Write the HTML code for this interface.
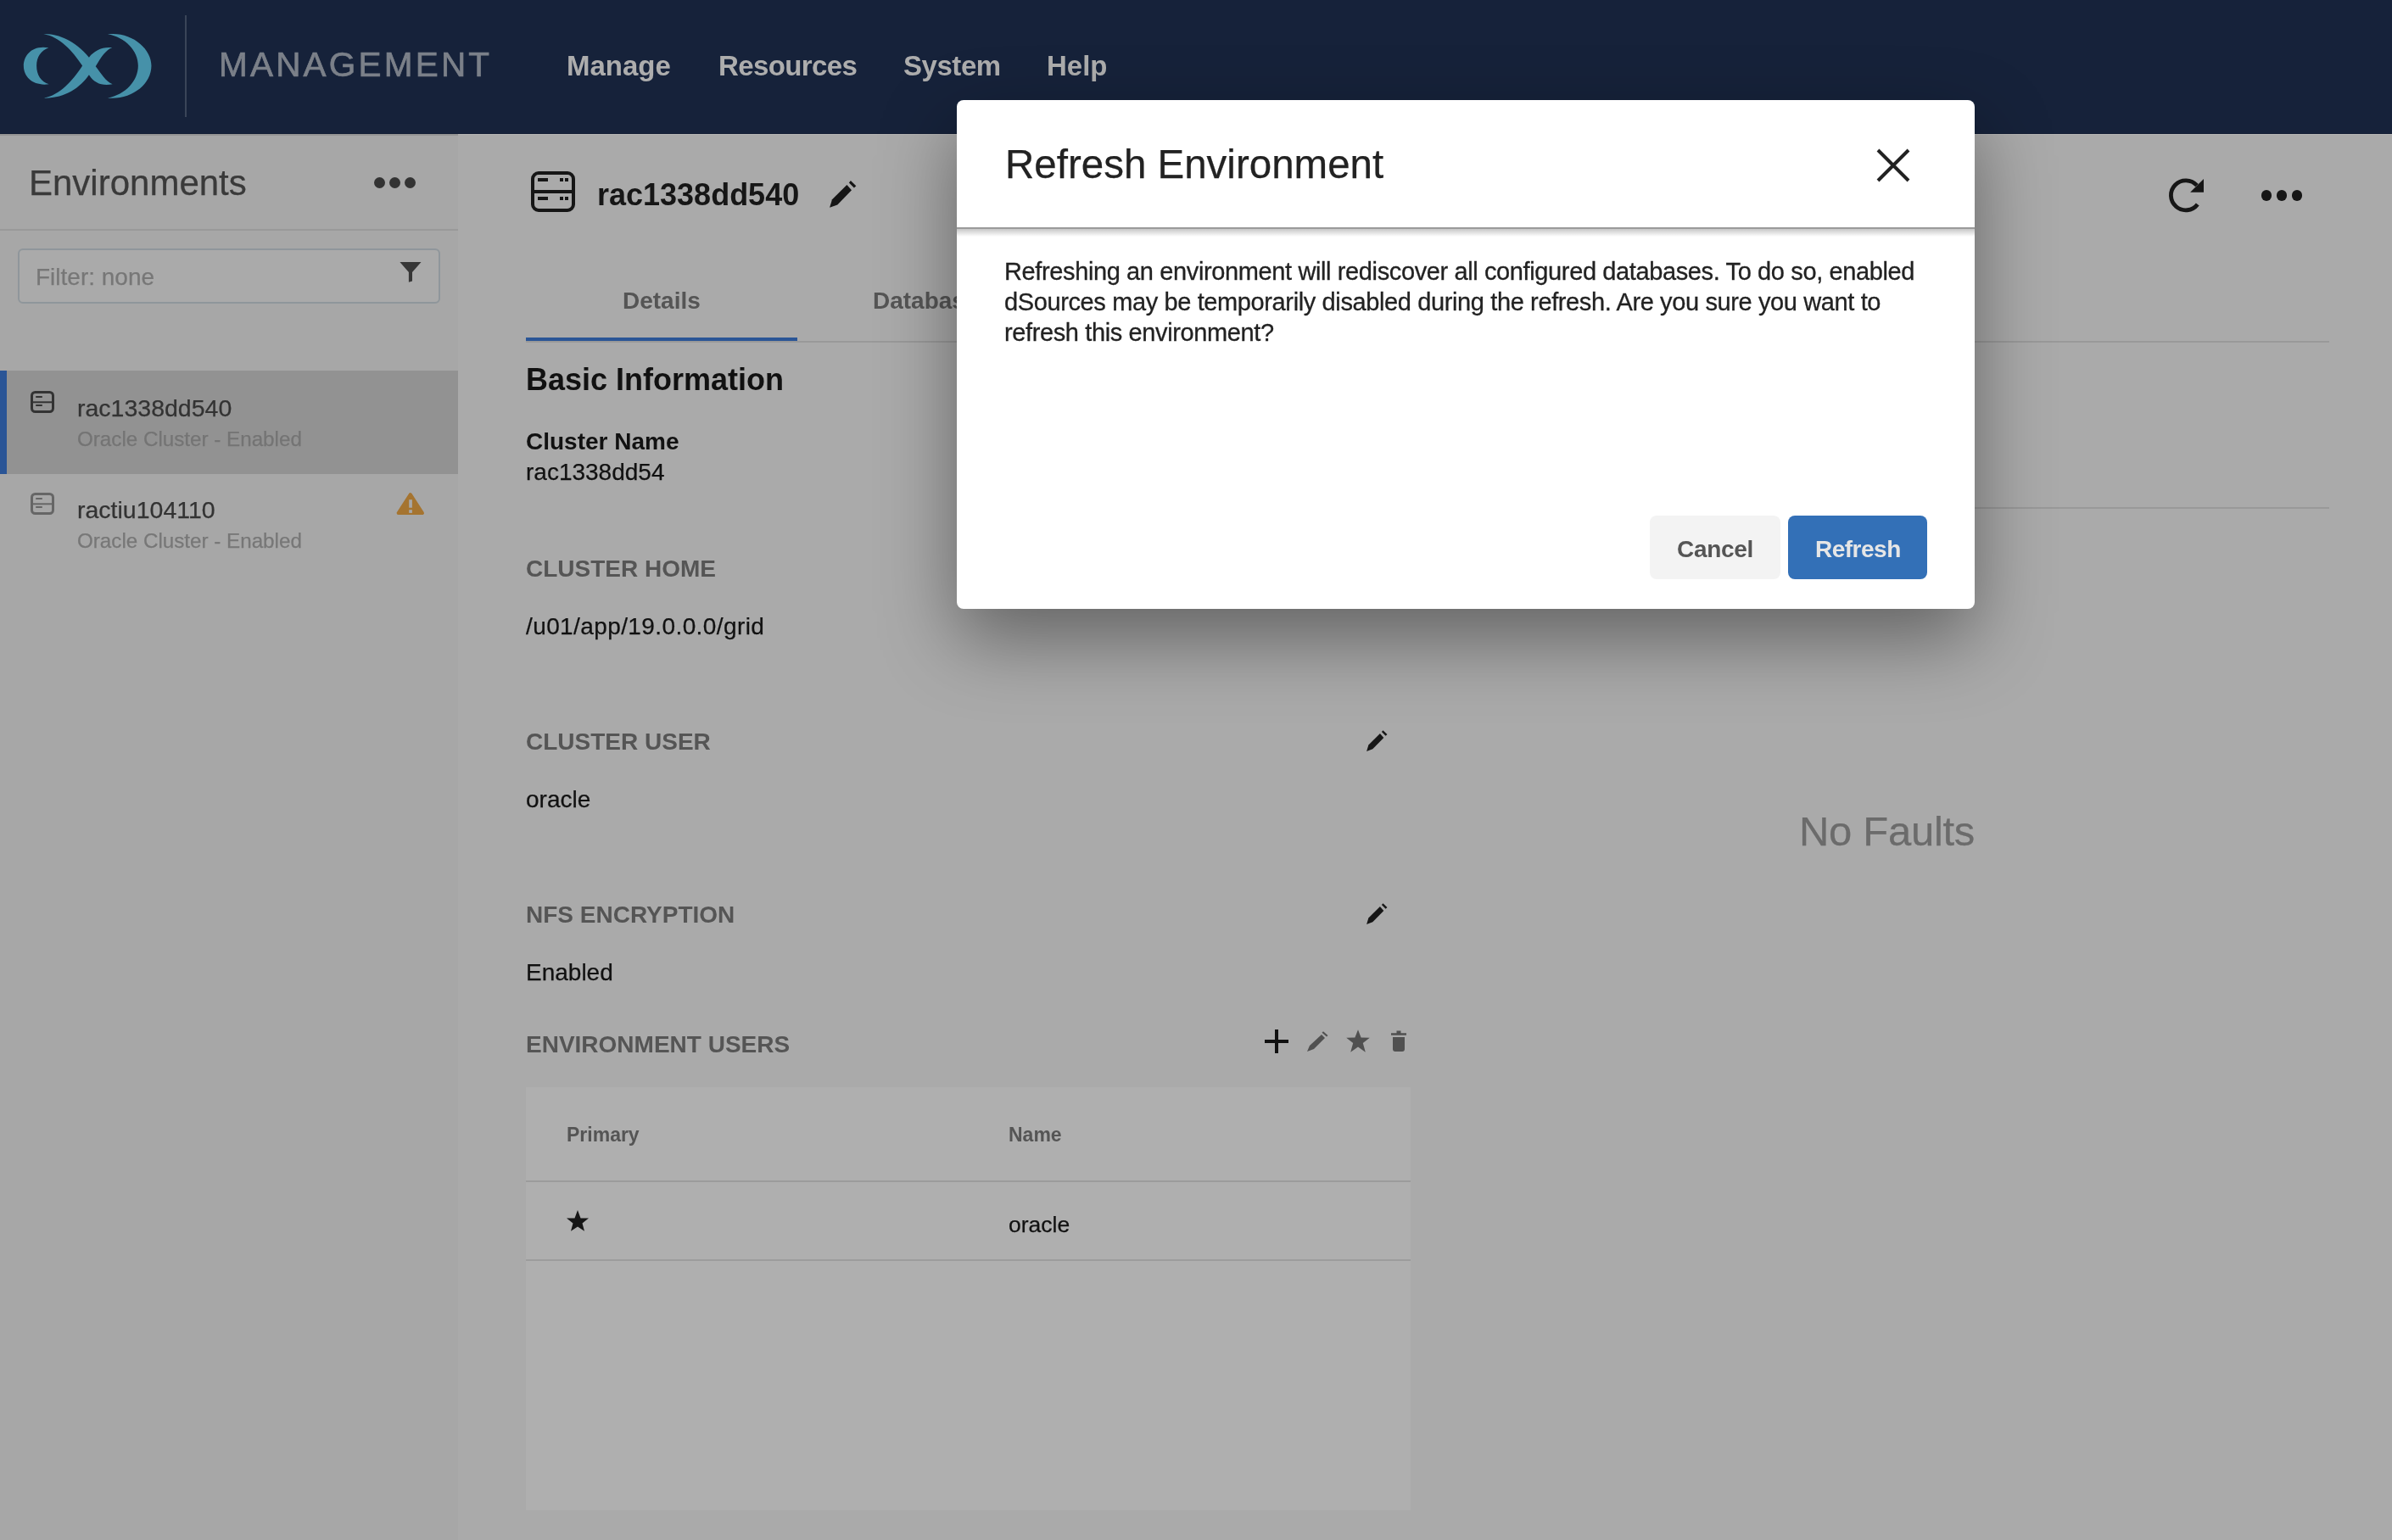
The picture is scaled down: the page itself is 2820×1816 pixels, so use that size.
<!DOCTYPE html>
<html><head><meta charset="utf-8">
<style>
*{margin:0;padding:0;box-sizing:border-box}
html,body{width:2820px;height:1816px;overflow:hidden}
body{position:relative;background:#aaaaaa;font-family:"Liberation Sans",sans-serif;color:#111}
.a{position:absolute;white-space:nowrap}
.t{position:absolute;white-space:nowrap;line-height:1;will-change:transform}
.b{font-weight:bold}
.s{-webkit-text-stroke:0.25px currentColor}
</style></head><body>
<div class="a" style="left:0;top:0;width:2820px;height:158px;background:#16223a"></div>
<svg class="a" style="left:20px;top:30px" width="170" height="95" viewBox="0 0 2392 1337">
<g fill="#4691a9">
<path d="M525,370 C250,320 110,500 110,670 C110,870 280,1010 530,975 C400,940 325,820 325,670 C325,520 400,420 525,370 Z"/>
<path d="M1505,145 C1900,100 2230,380 2230,670 C2230,980 1900,1240 1505,1205 C1800,1150 2010,920 2010,670 C2010,420 1800,200 1505,145 Z"/>
<path d="M440,145 C650,130 950,230 1195,530 C1280,420 1420,350 1580,370 C1480,400 1400,520 1305,680 C1400,800 1470,930 1585,975 C1420,1010 1280,960 1195,820 C1050,1030 800,1210 450,1205 C700,1160 920,930 1085,670 C920,420 700,180 440,145 Z"/>
</g></svg>
<div class="a" style="left:218px;top:18px;width:2px;height:120px;background:#3a4558"></div>
<div class="t" style="left:258px;top:56px;font-size:40.5px;color:#7b8089;letter-spacing:3.2px;-webkit-text-stroke:0.7px #7b8089">MANAGEMENT</div>
<div class="t b" style="left:668px;top:61px;font-size:33px;color:#adadad;">Manage</div>
<div class="t b" style="left:847px;top:61px;font-size:33px;color:#adadad;letter-spacing:-0.6px">Resources</div>
<div class="t b" style="left:1065px;top:61px;font-size:33px;color:#adadad;letter-spacing:-0.45px">System</div>
<div class="t b" style="left:1234px;top:61px;font-size:33px;color:#adadad;">Help</div>
<div class="a" style="left:0;top:158px;width:540px;height:1658px;background:#a7a7a7"></div>
<div class="a" style="left:0;top:158px;width:540px;height:2px;background:#949494"></div>
<div class="a" style="left:540px;top:158px;width:2280px;height:1px;background:#b4b4b4"></div>
<div class="a" style="left:0;top:157px;width:2820px;height:1px;background:#131e34"></div>
<div class="t s" style="left:33.5px;top:194.5px;font-size:42px;color:#3a3a3a;">Environments</div>
<div class="a" style="left:440.5px;top:208.5px;width:13px;height:13px;border-radius:50%;background:#333"></div>
<div class="a" style="left:458.5px;top:208.5px;width:13px;height:13px;border-radius:50%;background:#333"></div>
<div class="a" style="left:476.5px;top:208.5px;width:13px;height:13px;border-radius:50%;background:#333"></div>
<div class="a" style="left:0;top:270px;width:540px;height:2px;background:#999"></div>
<div class="a" style="left:21px;top:293px;width:498px;height:65px;border:2px solid #8f969b;border-radius:6px;background:#aaaaaa"></div>
<div class="t s" style="left:42px;top:312.7px;font-size:28px;color:#777;">Filter: none</div>
<svg class="a" style="left:470px;top:308px" width="28" height="26" viewBox="0 0 28 26">
<path d="M1.4,1 L26.5,1 L16,13.1 L16,23.4 L11.9,24.8 L11.9,13.1 Z" fill="#363636"/></svg>
<div class="a" style="left:0;top:437px;width:540px;height:122px;background:#929292"></div>
<div class="a" style="left:0;top:437px;width:8px;height:122px;background:#2a5596"></div>
<svg class="a" style="left:36px;top:461px" width="28" height="26" viewBox="0 0 28 26">
<rect x="1.5" y="1.5" width="25" height="23" rx="4" fill="none" stroke="#333" stroke-width="3"/>
<rect x="2" y="12.3" width="24" height="2" fill="#333"/>
<rect x="6.2" y="6" width="7.6" height="2" fill="#333"/>
<rect x="6.2" y="16" width="7.6" height="2" fill="#333"/>
</svg>
<div class="t s" style="left:91px;top:467.3px;font-size:28.5px;color:#333;">rac1338dd540</div>
<div class="t s" style="left:91px;top:505.8px;font-size:24.2px;color:#747474;">Oracle Cluster - Enabled</div>
<svg class="a" style="left:36px;top:581px" width="28" height="26" viewBox="0 0 28 26">
<rect x="1.5" y="1.5" width="25" height="23" rx="4" fill="none" stroke="#666" stroke-width="3"/>
<rect x="2" y="12.3" width="24" height="2" fill="#666"/>
<rect x="6.2" y="6" width="7.6" height="2" fill="#666"/>
<rect x="6.2" y="16" width="7.6" height="2" fill="#666"/>
</svg>
<div class="t s" style="left:91px;top:587.3px;font-size:28.5px;color:#333;">ractiu104110</div>
<div class="t s" style="left:91px;top:625.8px;font-size:24.2px;color:#777;">Oracle Cluster - Enabled</div>
<svg class="a" style="left:467px;top:580px" width="34" height="28" viewBox="0 0 34 28">
<path d="M16.8,3.2 L31,25 L2.6,25 Z" fill="#a57430" stroke="#a57430" stroke-width="4" stroke-linejoin="round"/>
<rect x="15.2" y="9.2" width="3.7" height="9.5" fill="#a7a7a7"/>
<rect x="15.2" y="21.2" width="3.7" height="3.7" fill="#a7a7a7"/>
</svg>
<svg class="a" style="left:626px;top:202px" width="52" height="48" viewBox="0 0 52 48">
<rect x="2" y="2" width="48" height="44" rx="7" fill="none" stroke="#161616" stroke-width="4"/>
<rect x="2" y="22" width="48" height="4" fill="#161616"/>
<rect x="8" y="8" width="12" height="4" fill="#161616"/>
<rect x="34" y="8" width="4" height="4" fill="#161616"/>
<rect x="40" y="8" width="4" height="4" fill="#161616"/>
<rect x="8" y="30" width="12" height="4" fill="#161616"/>
<rect x="34" y="30" width="4" height="4" fill="#161616"/>
<rect x="40" y="30" width="4" height="4" fill="#161616"/>
</svg>
<div class="t b" style="left:704px;top:212.0px;font-size:36px;color:#161616;">rac1338dd540</div>
<svg class="a" style="left:960px;top:200px" width="70" height="60" viewBox="0 0 70 60">
<path d="M38.4,18.1 L44,24.3 L27.3,41.5 L18.1,44.8 L21,35.3 Z" fill="#161616"/>
<path d="M42.9,13 L49.3,19.3 L46.9,21.6 L40.9,15.4 Z" fill="#161616"/>
</svg>
<div class="t b" style="left:734px;top:340.7px;font-size:28px;color:#555;">Details</div>
<div class="t b" style="left:1029px;top:340.7px;font-size:28px;color:#555;">Databases</div>
<div class="a" style="left:620px;top:402px;width:2126px;height:2px;background:#999"></div>
<div class="a" style="left:620px;top:398px;width:320px;height:4px;background:#2a5596"></div>
<div class="t b" style="left:620px;top:430.0px;font-size:36px;color:#111;">Basic Information</div>
<div class="t b" style="left:620px;top:506.7px;font-size:28px;color:#111;">Cluster Name</div>
<div class="t s" style="left:620px;top:542.7px;font-size:28px;color:#111;">rac1338dd54</div>
<div class="t b" style="left:620px;top:656.7px;font-size:28px;color:#555;">CLUSTER HOME</div>
<div class="t s" style="left:620px;top:724.7px;font-size:28px;color:#111;letter-spacing:0.4px">/u01/app/19.0.0.0/grid</div>
<div class="t b" style="left:620px;top:860.7px;font-size:28px;color:#555;">CLUSTER USER</div>
<div class="t s" style="left:620px;top:928.7px;font-size:28px;color:#111;">oracle</div>
<div class="t b" style="left:620px;top:1064.7px;font-size:28px;color:#555;">NFS ENCRYPTION</div>
<div class="t s" style="left:620px;top:1132.7px;font-size:28px;color:#111;">Enabled</div>
<div class="t b" style="left:620px;top:1218.2px;font-size:28px;color:#555;">ENVIRONMENT USERS</div>
<svg class="a" style="left:1597px;top:850.5px" width="54.6" height="46.8" viewBox="0 0 70 60">
<path d="M38.4,18.1 L44,24.3 L27.3,41.5 L18.1,44.8 L21,35.3 Z" fill="#161616"/>
<path d="M42.9,13 L49.3,19.3 L46.9,21.6 L40.9,15.4 Z" fill="#161616"/></svg>
<svg class="a" style="left:1597px;top:1054.5px" width="54.6" height="46.8" viewBox="0 0 70 60">
<path d="M38.4,18.1 L44,24.3 L27.3,41.5 L18.1,44.8 L21,35.3 Z" fill="#161616"/>
<path d="M42.9,13 L49.3,19.3 L46.9,21.6 L40.9,15.4 Z" fill="#161616"/></svg>
<svg class="a" style="left:1480px;top:1200px" width="190" height="60" viewBox="0 0 190 60">
<rect x="23" y="14" width="4" height="28" fill="#111"/>
<rect x="11" y="26" width="28" height="4" fill="#111"/>
<path d="M78,20 L82,24 L69,37 L61,40 L64,33 Z" fill="#505050"/>
<path d="M80,16.3 L85.5,21 L84,22.6 L78.5,17.8 Z" fill="#505050"/>
<path d="M121,14.3 L124.6,23.5 L134.8,23.8 L126.8,30 L129.8,40.8 L121,34.6 L112.2,40.8 L115.2,30 L107.2,23.8 L117.4,23.5 Z" fill="#505050"/>
<path d="M166.5,15.5 L171.5,15.5 L171.5,18.2 L178,18.2 L178,20.8 L160,20.8 L160,18.2 L166.5,18.2 Z" fill="#505050"/>
<path d="M162,23 L176,23 L176,37 Q176,40 173,40 L165,40 Q162,40 162,37 Z" fill="#505050"/>
</svg>
<div class="a" style="left:620px;top:1282px;width:1043px;height:499px;background:#afafaf"></div>
<div class="t b" style="left:668px;top:1326.8px;font-size:23px;color:#555;">Primary</div>
<div class="t b" style="left:1189px;top:1326.8px;font-size:23px;color:#555;">Name</div>
<div class="a" style="left:620px;top:1392px;width:1043px;height:2px;background:#9c9c9c"></div>
<svg class="a" style="left:655px;top:1415px" width="55" height="50" viewBox="0 0 55 50">
<path d="M26,12 L29.5,21.4 L39,21.4 L31.5,27.4 L34,36.7 L26,31.4 L18,36.7 L20.5,27.4 L13,21.4 L22.5,21.4 Z" fill="#161616"/></svg>
<div class="t s" style="left:1189px;top:1430.9px;font-size:26.5px;color:#111;">oracle</div>
<div class="a" style="left:620px;top:1485px;width:1043px;height:2px;background:#9c9c9c"></div>
<svg class="a" style="left:2555px;top:208px" width="46" height="46" viewBox="0 0 46 46">
<path d="M35,10.7 A17.5,17.5 0 1 0 35.8,33" fill="none" stroke="#161616" stroke-width="4.8"/>
<path d="M27.1,18.8 L43,2.9 L43,18.8 Z" fill="#161616"/></svg>
<div class="a" style="left:2665.75px;top:224px;width:12.5px;height:12.5px;border-radius:50%;background:#161616"></div>
<div class="a" style="left:2683.75px;top:224px;width:12.5px;height:12.5px;border-radius:50%;background:#161616"></div>
<div class="a" style="left:2701.75px;top:224px;width:12.5px;height:12.5px;border-radius:50%;background:#161616"></div>
<div class="a" style="left:1704px;top:598px;width:1042px;height:2px;background:#999"></div>
<div class="t s" style="left:2121px;top:956px;font-size:49px;color:#6b6b6b;letter-spacing:-0.3px;">No Faults</div>
<div class="a" style="left:1128px;top:118px;width:1200px;height:600px;background:#fff;border-radius:8px;box-shadow:0 35px 90px rgba(0,0,0,.42)"></div>
<div class="a" style="left:1128px;top:267.5px;width:1200px;height:2px;background:#9a9a9a"></div>
<div class="a" style="left:1128px;top:269.5px;width:1200px;height:9px;background:linear-gradient(rgba(0,0,0,.22),rgba(0,0,0,0))"></div>
<div class="t s" style="left:1185px;top:170.4px;font-size:47.5px;color:#222;">Refresh Environment</div>
<svg class="a" style="left:2212px;top:174.5px" width="40" height="40" viewBox="0 0 40 40">
<path d="M2,2 L38,38 M38,2 L2,38" stroke="#222" stroke-width="4"/></svg>
<div class="a" style="left:1184px;top:302.2px;width:1100px;font-size:29px;line-height:36px;letter-spacing:-0.38px;color:#222;white-space:normal;-webkit-text-stroke:0.3px #222;will-change:transform">Refreshing an environment will rediscover all configured databases. To do so, enabled dSources may be temporarily disabled during the refresh. Are you sure you want to refresh this environment?</div>
<div class="a" style="left:1945px;top:608px;width:154px;height:75px;border-radius:8px;background:#f3f3f3"></div>
<div class="t b" style="left:1977px;top:633.7px;font-size:28px;color:#555;letter-spacing:-0.3px">Cancel</div>
<div class="a" style="left:2108px;top:608px;width:164px;height:75px;border-radius:8px;background:#3370b7"></div>
<div class="t b" style="left:2140px;top:633.7px;font-size:28px;color:#e6e6e6;letter-spacing:-0.5px">Refresh</div>
</body></html>
